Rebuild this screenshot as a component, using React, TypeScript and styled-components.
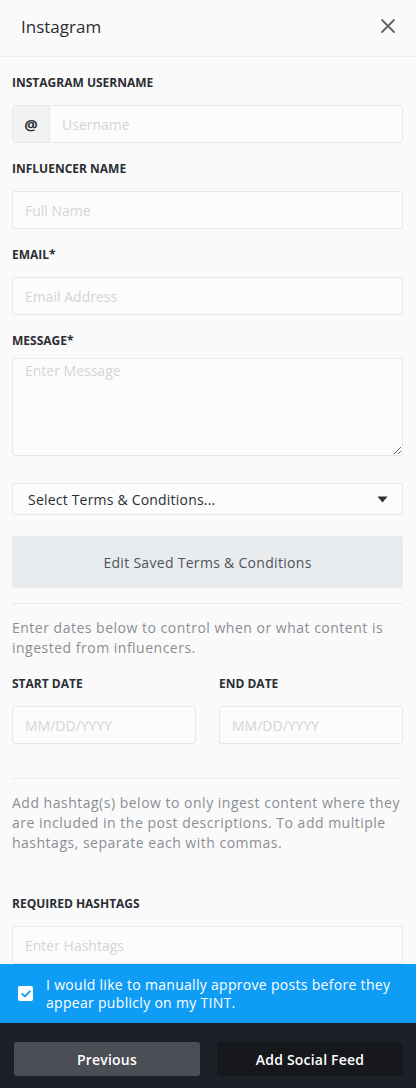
import styled, { createGlobalStyle } from 'styled-components';

const FONT = `'Open Sans', 'Lato', sans-serif`;

const GlobalStyle = createGlobalStyle`
	html, body {
		margin: 0;
		padding: 0;
		background: #fafafa;
	}

	body {
		font-family: ${FONT};
		color: #2b2e33;
	}

	* {
		box-sizing: border-box;
	}
`;

const App = () => {
	return (
		<>
			<GlobalStyle />
			<Panel>
				<Header>
					<Title>Instagram</Title>
					<CloseButton aria-label='Close'>
						<svg width='16' height='16' viewBox='0 0 16 16'>
							<path d='M2 2 L14 14 M14 2 L2 14' stroke='#5f6369' strokeWidth='1.8' strokeLinecap='round' />
						</svg>
					</CloseButton>
				</Header>

				<Body>
					<Field>
						<Label>Instagram Username</Label>
						<InputGroup>
							<Addon>@</Addon>
							<GroupInput placeholder='Username' />
						</InputGroup>
					</Field>

					<Field>
						<Label>Influencer Name</Label>
						<Input placeholder='Full Name' />
					</Field>

					<Field>
						<Label>Email*</Label>
						<Input placeholder='Email Address' />
					</Field>

					<Field $bottom={27}>
						<Label>Message*</Label>
						<TextArea placeholder='Enter Message' />
					</Field>

					<Select>
						<span>Select Terms &amp; Conditions...</span>
						<svg width='11' height='7' viewBox='0 0 11 7'>
							<path d='M0.5 0.5 L10.5 0.5 L5.5 6.5 Z' fill='#2b2e33' />
						</svg>
					</Select>

					<GhostButton>Edit Saved Terms &amp; Conditions</GhostButton>

					<Divider $top={15} />

					<Hint>Enter dates below to control when or what content is ingested from influencers.</Hint>

					<DateRow>
						<Field $bottom={0}>
							<Label>Start Date</Label>
							<Input placeholder='MM/DD/YYYY' />
						</Field>
						<Field $bottom={0}>
							<Label>End Date</Label>
							<Input placeholder='MM/DD/YYYY' />
						</Field>
					</DateRow>

					<Divider $top={34} />

					<Hint $bottom={44}>
						Add hashtag(s) below to only ingest content where they are included in the post descriptions. To add
						multiple hashtags, separate each with commas.
					</Hint>

					<Field $bottom={0}>
						<Label>Required Hashtags</Label>
						<Input placeholder='Enter Hashtags' />
					</Field>
				</Body>

				<ApproveBar>
					<CheckBox>
						<svg width='10' height='8' viewBox='0 0 10 8'>
							<path d='M1.2 4 L4 6.4 L8.8 1.4' stroke='#1a9bf0' strokeWidth='1.9' fill='none' strokeLinecap='round' strokeLinejoin='round' />
						</svg>
					</CheckBox>
					<ApproveText>I would like to manually approve posts before they appear publicly on my TINT.</ApproveText>
				</ApproveBar>

				<Footer>
					<FooterButton $variant='secondary'>Previous</FooterButton>
					<FooterButton $variant='primary'>Add Social Feed</FooterButton>
				</Footer>
			</Panel>
		</>
	);
};

export default App;

const Panel = styled.div`
	width: 416px;
	height: 1088px;
	display: flex;
	flex-direction: column;
	background: #fafafa;
	overflow: hidden;

	> * {
		flex-shrink: 0;
	}
`;

const Header = styled.div`
	height: 57px;
	display: flex;
	align-items: center;
	justify-content: space-between;
	padding: 0 20px 4px 21px;
	border-bottom: 1px solid #eceef0;
`;

const Title = styled.h1`
	margin: 0;
	font-size: 17px;
	font-weight: 400;
	color: #2b2e33;
`;

const CloseButton = styled.button`
	display: flex;
	padding: 0;
	border: none;
	background: none;
`;

const Body = styled.div`
	flex: 1;
	display: flex;
	flex-direction: column;
	padding: 19px 13px 0 12px;
`;

const Field = styled.div<{ $bottom?: number }>`
	flex: 1;
	display: flex;
	flex-direction: column;
	gap: 15px;
	margin-bottom: ${(p) => p.$bottom ?? 19}px;
`;

const Label = styled.label`
	font-size: 12px;
	font-weight: 700;
	line-height: 14px;
	text-transform: uppercase;
	color: #2b2e33;
`;

const fieldBox = `
	height: 38px;
	border: 1px solid #e6e7e9;
	border-radius: 3px;
	background: #fcfcfc;
	font-family: ${FONT};
	font-size: 14px;
	color: #2b2e33;
	outline: none;

	&::placeholder {
		color: #d3d5d8;
	}
`;

const Input = styled.input`
	${fieldBox}
	width: 100%;
	padding: 0 12px;
`;

const InputGroup = styled.div`
	display: flex;
	height: 38px;
	border: 1px solid #e6e7e9;
	border-radius: 3px;
	overflow: hidden;
`;

const Addon = styled.span`
	width: 37px;
	display: flex;
	align-items: center;
	justify-content: center;
	background: #f2f2f3;
	border-right: 1px solid #e6e7e9;
	font-size: 15px;
	font-weight: 700;
	color: #2b2e33;
`;

const GroupInput = styled.input`
	${fieldBox}
	flex: 1;
	height: 100%;
	border: none;
	border-radius: 0;
	padding: 0 12px;
`;

const TextArea = styled.textarea`
	${fieldBox}
	height: 98px;
	margin-top: -5px;
	padding: 2px 12px;
	resize: vertical;
`;

const Select = styled.div`
	height: 32px;
	display: flex;
	align-items: center;
	justify-content: space-between;
	padding: 0 14px 0 15px;
	border: 1px solid #e6e7e9;
	border-radius: 3px;
	background: #fcfcfc;
	font-size: 14px;
	letter-spacing: 0.2px;
	color: #2b2e33;
`;

const GhostButton = styled.div`
	height: 52px;
	margin-top: 21px;
	display: flex;
	align-items: center;
	justify-content: center;
	border-radius: 3px;
	background: #e9ecef;
	font-size: 14px;
	letter-spacing: 0.3px;
	color: #4e5258;
`;

const Divider = styled.hr<{ $top: number }>`
	width: 100%;
	margin: ${(p) => p.$top}px 0 0;
	border: none;
	border-top: 1px solid #e9ecef;
`;

const Hint = styled.p<{ $bottom?: number }>`
	margin: 14px 0 ${(p) => p.$bottom ?? 19}px;
	font-size: 14px;
	line-height: 20px;
	letter-spacing: 0.5px;
	color: #8a8e94;
`;

const DateRow = styled.div`
	display: flex;
	gap: 23px;
`;

const ApproveBar = styled.div`
	height: 59px;
	display: flex;
	align-items: center;
	gap: 13px;
	padding: 0 18px;
	background: #0f9cf5;
`;

const CheckBox = styled.span`
	width: 15px;
	height: 15px;
	flex-shrink: 0;
	display: flex;
	align-items: center;
	justify-content: center;
	border-radius: 2px;
	background: #ffffff;
`;

const ApproveText = styled.span`
	font-size: 14px;
	line-height: 18px;
	letter-spacing: 0.3px;
	color: #ffffff;
`;

const Footer = styled.div`
	flex: 1;
	display: flex;
	gap: 17px;
	padding: 19px 13px 0 14px;
	background: #1b2029;
`;

const FooterButton = styled.button<{ $variant: 'primary' | 'secondary' }>`
	flex: 1;
	height: 34px;
	border: none;
	border-radius: 3px;
	background: ${(p) => (p.$variant === 'primary' ? '#16181c' : '#4b4e55')};
	font-family: ${FONT};
	font-size: 14px;
	font-weight: 600;
	letter-spacing: 0.2px;
	color: #ffffff;
`;
